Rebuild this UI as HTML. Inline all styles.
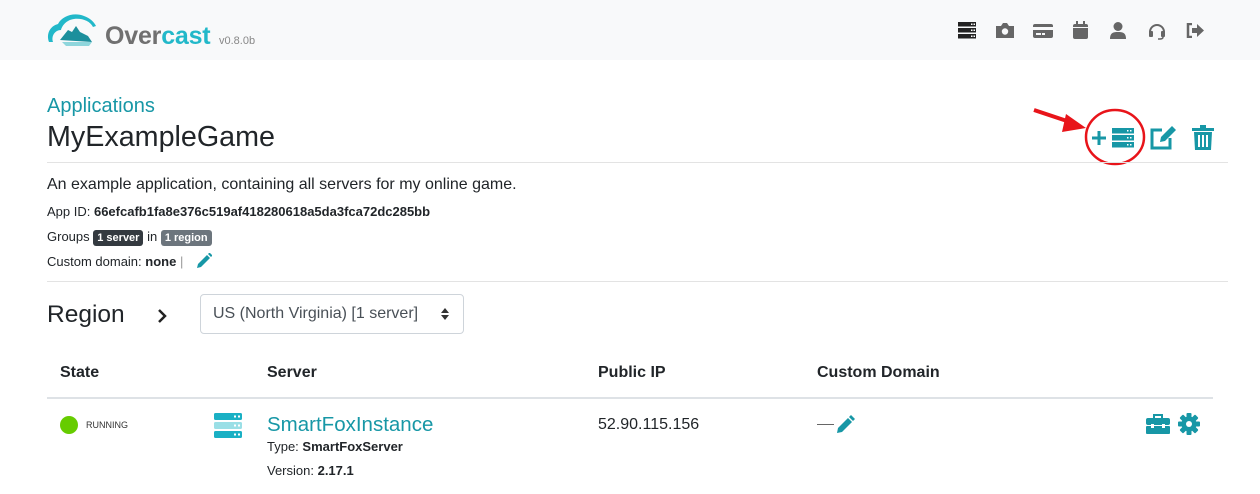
<!DOCTYPE html>
<html><head><meta charset="utf-8"><style>
*{margin:0;padding:0;box-sizing:border-box}
body{width:1260px;height:494px;overflow:hidden;background:#fff;font-family:"Liberation Sans",sans-serif;color:#212529;position:relative}
.a{position:absolute;white-space:nowrap}
.t{color:#1797a6}
.b{font-weight:bold}
.badge{display:inline-block;color:#fff;font-weight:bold;font-size:11px;padding:2px 4px;border-radius:3px;line-height:12px}
</style></head><body>
<div class="a" style="left:0;top:0;width:1260px;height:60px;background:#f8f9fa"></div>
<svg class="a" style="left:46px;top:12px" width="56" height="34" viewBox="0 0 56 34">
<path d="M3 30 C0 22 4 14 12 12 C16 4 28 0 38 4 C44 6 48 10 50 14 L47 15 C44 9 36 6 28 7 C20 8 16 14 15 18 C9 18 5 24 7 30 Z" fill="#22b8c9"/>
<path d="M14 28 L22 18 L26 20 L30 14 L34 20 L42 24 L46 30 Z" fill="#1c8f9c"/>
<path d="M16 30 L46 30 L43 34 L20 34 Z" fill="#8fd6dc"/>
</svg>
<div class="a b" style="left:105px;top:21px;font-size:25px;line-height:30px;color:#707070;letter-spacing:-0.2px">Over<span style="color:#22b8c9">cast</span></div>
<div class="a" style="left:219px;top:35px;font-size:11px;color:#888">v0.8.0b</div>
<!-- top icons -->
<svg class="a" style="left:958px;top:22px" width="18" height="17"><rect y="0" width="18" height="4.5" fill="#222"/><rect y="6" width="18" height="4.5" fill="#222"/><rect y="12" width="18" height="4.5" fill="#222"/><rect x="13" y="1.5" width="1.5" height="1.5" fill="#fff"/><rect x="15.5" y="1.5" width="1.5" height="1.5" fill="#fff"/><rect x="13" y="7.5" width="1.5" height="1.5" fill="#fff"/><rect x="15.5" y="7.5" width="1.5" height="1.5" fill="#fff"/><rect x="13" y="13.5" width="1.5" height="1.5" fill="#fff"/><rect x="15.5" y="13.5" width="1.5" height="1.5" fill="#fff"/></svg>
<svg class="a" style="left:996px;top:23px" width="18" height="15"><path d="M0 3h5l2-3h4l2 3h5v12H0z" fill="#666"/><circle cx="9" cy="8.5" r="3.2" fill="#f8f9fa"/></svg>
<svg class="a" style="left:1033px;top:24px" width="20" height="14"><rect width="20" height="14" rx="2" fill="#666"/><rect y="3" width="20" height="3" fill="#f8f9fa"/><rect x="3" y="9" width="5" height="2" fill="#f8f9fa"/><rect x="9" y="9" width="3" height="2" fill="#f8f9fa"/></svg>
<svg class="a" style="left:1073px;top:21px" width="15" height="18"><rect y="3" width="15" height="15" rx="2" fill="#666"/><rect x="3" y="0" width="2" height="5" fill="#666"/><rect x="10" y="0" width="2" height="5" fill="#666"/><rect y="6" width="15" height="1" fill="#f8f9fa"/></svg>
<svg class="a" style="left:1110px;top:22px" width="16" height="17"><circle cx="8" cy="4.5" r="4.5" fill="#666"/><path d="M0 17c0-6 3-7 8-7s8 1 8 7z" fill="#666"/></svg>
<svg class="a" style="left:1148px;top:22px" width="18" height="18"><path d="M2 10a7 7 0 0 1 14 0" stroke="#666" stroke-width="2" fill="none"/><rect x="1" y="9" width="4" height="6" rx="1" fill="#666"/><rect x="13" y="9" width="4" height="6" rx="1" fill="#666"/><path d="M15 15c0 2-2 2-5 2" stroke="#666" stroke-width="1.5" fill="none"/></svg>
<svg class="a" style="left:1186px;top:23px" width="18" height="15"><path d="M6 1H2v13h4" stroke="#666" stroke-width="2.5" fill="none"/><path d="M6 5h5V1l7 6.5-7 6.5v-4H6z" fill="#666"/></svg>

<div class="a t" style="left:47px;top:95px;font-size:20px">Applications</div>
<div class="a" style="left:47px;top:121px;font-size:28.7px">MyExampleGame</div>
<!-- arrow + circle -->
<svg class="a" style="left:1030px;top:106px" width="120" height="64">
<path d="M4 4 L40 16" stroke="#e8141a" stroke-width="4"/>
<path d="M36 8 L56 22 L32 26 Z" fill="#e8141a"/>
<ellipse cx="85" cy="31" rx="29" ry="27" stroke="#e8141a" stroke-width="2.5" fill="none"/>
<path d="M62 32h14M69 25v14" stroke="#1797a6" stroke-width="3"/>
<g fill="#1797a6"><rect x="82" y="22" width="22" height="5.5"/><rect x="82" y="29" width="22" height="5.5"/><rect x="82" y="36" width="22" height="5.5"/></g>
<g fill="#fff"><rect x="97" y="24" width="1.5" height="1.5"/><rect x="100" y="24" width="1.5" height="1.5"/><rect x="97" y="31" width="1.5" height="1.5"/><rect x="100" y="31" width="1.5" height="1.5"/><rect x="97" y="38" width="1.5" height="1.5"/><rect x="100" y="38" width="1.5" height="1.5"/></g>
</svg>
<svg class="a" style="left:1150px;top:126px" width="28" height="24"><path d="M12 4H2v18h18V12" stroke="#1797a6" stroke-width="3" fill="none"/><path d="M10 16l1-5 11-11 4 4-11 11z" fill="#1797a6"/></svg>
<svg class="a" style="left:1192px;top:125px" width="22" height="25"><rect x="0" y="3" width="22" height="3" fill="#1797a6"/><rect x="8" y="0" width="6" height="3" fill="#1797a6"/><path d="M2 7h18l-1 18H3z" fill="#1797a6"/><g fill="#fff"><rect x="6" y="10" width="2" height="12"/><rect x="10" y="10" width="2" height="12"/><rect x="14" y="10" width="2" height="12"/></g></svg>
<div class="a" style="left:47px;top:162px;width:1181px;height:1px;background:#e3e3e3"></div>
<div class="a" style="left:47px;top:176px;font-size:16px">An example application, containing all servers for my online game.</div>
<div class="a" style="left:47px;top:204px;font-size:13px">App ID: <b>66efcafb1fa8e376c519af418280618a5da3fca72dc285bb</b></div>
<div class="a" style="left:47px;top:229px;font-size:13px">Groups <span class="badge" style="background:#343a40">1 server</span> in <span class="badge" style="background:#6c757d">1 region</span></div>
<div class="a" style="left:47px;top:254px;font-size:13px">Custom domain: <b>none</b> <span style="color:#999">|</span></div>
<svg class="a" style="left:197px;top:253px" width="15" height="15"><path d="M0 15l1-4 9-9 3 3-9 9z M11 1l1.5-1.5 3 3L14 4z" fill="#1797a6"/></svg>
<div class="a" style="left:47px;top:281px;width:1181px;height:1px;background:#e3e3e3"></div>
<div class="a" style="left:47px;top:301px;font-size:24.5px">Region</div>
<svg class="a" style="left:157px;top:309px" width="10" height="14"><path d="M2 1l6 6-6 6" stroke="#222" stroke-width="2.5" fill="none"/></svg>
<div class="a" style="left:200px;top:294px;width:264px;height:40px;border:1px solid #ced4da;border-radius:4px;font-size:16px;padding:10px 12px;color:#495057">US (North Virginia) [1 server]</div>
<svg class="a" style="left:441px;top:308px" width="8" height="12"><path d="M0 5l4-5 4 5zM0 7l4 5 4-5z" fill="#333"/></svg>
<div class="a b" style="left:60px;top:364px;font-size:16px">State</div>
<div class="a b" style="left:267px;top:364px;font-size:16px">Server</div>
<div class="a b" style="left:598px;top:364px;font-size:16px">Public IP</div>
<div class="a b" style="left:817px;top:364px;font-size:16px">Custom Domain</div>
<div class="a" style="left:47px;top:397px;width:1166px;height:2px;background:#dee2e6"></div>
<div class="a" style="left:60px;top:416px;width:18px;height:18px;border-radius:50%;background:#66cc00"></div>
<div class="a" style="left:86px;top:420px;font-size:9px;color:#333">RUNNING</div>
<svg class="a" style="left:214px;top:413px" width="28" height="25"><rect width="28" height="7" rx="1.5" fill="#1ab0c4"/><rect y="9" width="28" height="7" rx="1.5" fill="#9adfe6"/><rect y="18" width="28" height="7" rx="1.5" fill="#1ab0c4"/><g fill="#fff"><rect x="20" y="2.5" width="2" height="2"/><rect x="24" y="2.5" width="2" height="2"/><rect x="20" y="11.5" width="2" height="2"/><rect x="24" y="11.5" width="2" height="2"/><rect x="20" y="20.5" width="2" height="2"/><rect x="24" y="20.5" width="2" height="2"/></g></svg>
<div class="a t" style="left:267px;top:413px;font-size:20.5px">SmartFoxInstance</div>
<div class="a" style="left:267px;top:439px;font-size:13px">Type: <b>SmartFoxServer</b></div>
<div class="a" style="left:267px;top:463px;font-size:13px">Version: <b>2.17.1</b></div>
<div class="a" style="left:598px;top:416px;font-size:16px">52.90.115.156</div>
<div class="a" style="left:817px;top:424px;width:17px;height:1px;background:#666"></div>
<svg class="a" style="left:837px;top:415px" width="18" height="18"><path d="M0 18l1-5 10-10 4 4-10 10z M12 2l2-2 4 4-2 2z" fill="#1797a6"/></svg>
<svg class="a" style="left:1146px;top:414px" width="24" height="20"><path d="M8 4V1h8v3" stroke="#1797a6" stroke-width="2" fill="none"/><rect y="4" width="24" height="7" rx="2" fill="#1797a6"/><rect y="12" width="24" height="8" rx="1" fill="#1797a6"/><rect x="5" y="10" width="3" height="4" fill="#fff"/><rect x="16" y="10" width="3" height="4" fill="#fff"/></svg>
<svg class="a" style="left:1178px;top:413px" width="22" height="22" viewBox="0 0 22 22"><g fill="#1797a6" transform="translate(11 11)"><rect x="-2.5" y="-11" width="5" height="22" rx="1"/><rect x="-2.5" y="-11" width="5" height="22" rx="1" transform="rotate(45)"/><rect x="-2.5" y="-11" width="5" height="22" rx="1" transform="rotate(90)"/><rect x="-2.5" y="-11" width="5" height="22" rx="1" transform="rotate(135)"/><circle r="7.5"/></g><circle cx="11" cy="11" r="3" fill="#fff"/></svg>
</body></html>
